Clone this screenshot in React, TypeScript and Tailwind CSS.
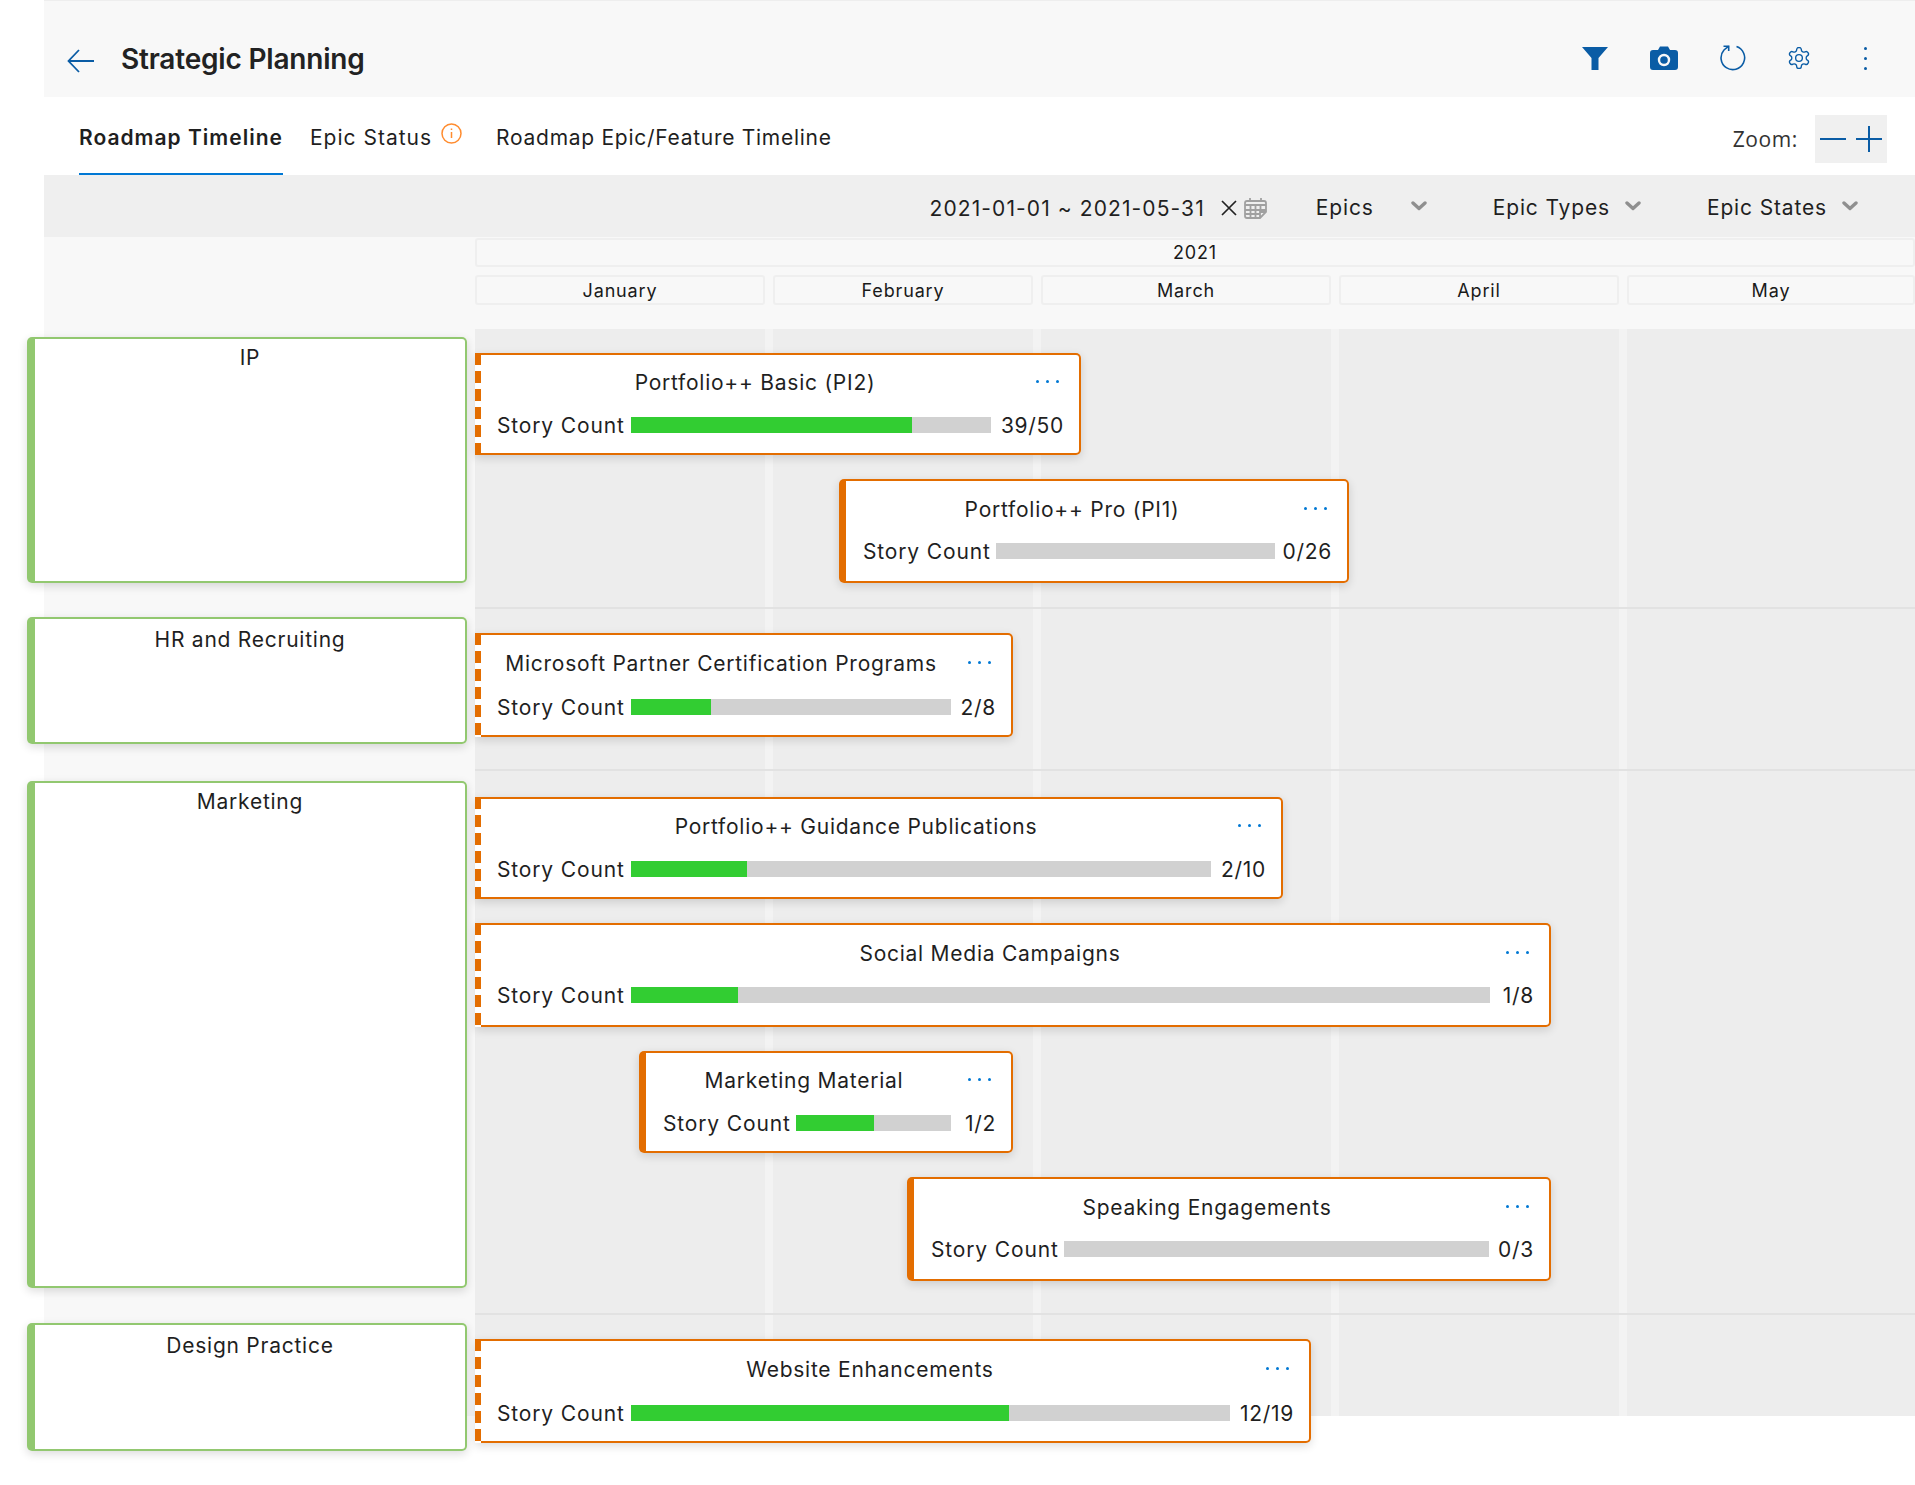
import React from "react";

const BLUE = "#0a5ca5";

type Epic = {
  title: string; done: number; total: number; label: string;
  outer: string; dashed: boolean; bar: number; tall: boolean; low?: boolean;
};

function Dots() {
  return (
    <div className="flex w-[23px] justify-between">
      <span className="h-[3px] w-[3px] rounded-full bg-[#0078d4]" />
      <span className="h-[3px] w-[3px] rounded-full bg-[#0078d4]" />
      <span className="h-[3px] w-[3px] rounded-full bg-[#0078d4]" />
    </div>
  );
}

function EpicCard({ e }: { e: Epic }) {
  const pct = (e.done / e.total) * 100;
  return (
    <div className={`flex shrink-0 bg-white shadow-[0_3px_10px_rgba(0,0,0,0.14)] rounded-r-[5px] ${e.tall ? "h-[104px]" : "h-[102px]"} ${e.dashed ? "" : "rounded-l-[5px]"} ${e.outer}`}>
      {e.dashed ? (
        <div className="w-[6px] shrink-0 bg-[repeating-linear-gradient(to_bottom,#e36d00_0,#e36d00_12px,#ffffff_12px,#ffffff_18px)]" />
      ) : (
        <div className="w-[7px] shrink-0 rounded-l-[5px] bg-[#e36d00]" />
      )}
      <div className={`flex min-w-0 flex-1 flex-col rounded-r-[5px] border-y-2 border-r-2 border-[#e36d00] pr-[15px] ${e.dashed ? "pl-[16px]" : "pl-[17px]"}`}>
        <div className={`flex h-[54px] shrink-0 items-center ${e.tall ? "pt-[2px]" : ""}`}>
          <div className="flex-1 pl-[3px] pt-[1px] text-center tracking-[0.75px]">{e.title}</div>
          <div className="-mt-[2px] ml-[26px] mr-[5px]"><Dots /></div>
        </div>
        <div className={`flex h-[32px] items-center ${e.low ? "mt-[2px]" : ""}`}>
          <span className={`shrink-0 whitespace-nowrap pt-[2px] ${e.dashed ? "w-[134px]" : "w-[133px]"}`}>Story Count</span>
          <div className="h-[16px] bg-[#d1d1d1]" style={{ width: e.bar }}>
            <div className="h-full bg-[#32cd32]" style={{ width: `${pct}%` }} />
          </div>
          <span className="ml-auto whitespace-nowrap pt-[2px] tracking-[0.7px]">{e.label}</span>
        </div>
      </div>
    </div>
  );
}

function GroupCard({ name, outer, top }: { name: string; outer: string; top: string }) {
  return (
    <div className={`-ml-[17px] flex w-[440px] rounded-[5px] bg-white shadow-[0_3px_10px_rgba(0,0,0,0.14)] ${outer}`}>
      <div className="w-[8px] shrink-0 rounded-l-[5px] bg-[#92c870]" />
      <div className={`flex-1 rounded-r-[5px] border-y-2 border-r-2 border-[#92c870] text-center leading-[30px] tracking-[0.75px] ${top}`}>{name}</div>
    </div>
  );
}

const r1: Epic[] = [
  { title: "Portfolio++ Basic (PI2)", done: 39, total: 50, label: "39/50", outer: "w-[606px]", dashed: true, bar: 360, tall: false },
  { title: "Portfolio++ Pro (PI1)", done: 0, total: 26, label: "0/26", outer: "ml-[364px] w-[510px]", dashed: false, bar: 279, tall: true },
];
const r2: Epic[] = [
  { title: "Microsoft Partner Certification Programs", done: 2, total: 8, label: "2/8", outer: "w-[538px]", dashed: true, bar: 320, tall: true, low: true },
];
const r3: Epic[] = [
  { title: "Portfolio++ Guidance Publications", done: 2, total: 10, label: "2/10", outer: "w-[808px]", dashed: true, bar: 580, tall: false },
  { title: "Social Media Campaigns", done: 1, total: 8, label: "1/8", outer: "w-[1076px]", dashed: true, bar: 859, tall: true },
  { title: "Marketing Material", done: 1, total: 2, label: "1/2", outer: "ml-[164px] w-[374px]", dashed: false, bar: 155, tall: false },
  { title: "Speaking Engagements", done: 0, total: 3, label: "0/3", outer: "ml-[432px] w-[644px]", dashed: false, bar: 425, tall: true },
];
const r4: Epic[] = [
  { title: "Website Enhancements", done: 12, total: 19, label: "12/19", outer: "w-[836px]", dashed: true, bar: 599, tall: true, low: true },
];

function Chevron() {
  return (
    <svg width="16" height="10" viewBox="0 0 16 10" fill="none">
      <path d="M2 2 L8 7.5 L14 2" stroke="#8f8f8f" strokeWidth="3.4" strokeLinecap="round" strokeLinejoin="round" />
    </svg>
  );
}

function Month({ name, outer }: { name: string; outer: string }) {
  return (
    <div className={`flex h-[30px] items-center justify-center rounded-[3px] border-2 border-[#efefef] text-[18px] tracking-[0.85px] text-[#1a1a1a] ${outer}`}>{name}</div>
  );
}

export default function App() {
  return (
    <div className="min-h-[1485px] w-[1915px] overflow-hidden bg-white font-['Inter',sans-serif] text-[21px] tracking-[0.85px] text-[#1f1f1f]">
      <header className="ml-[44px] flex h-[97px] items-center border-t border-[#eeeeee] bg-[#f8f8f8] pl-[23px] pr-[47px] pt-[23px]">
        <svg width="27" height="24" viewBox="0 0 27 24" fill="none" stroke={BLUE} strokeWidth="1.8">
          <path d="M27 12 H1.5 M12 1 L1.5 12 L12 23" />
        </svg>
        <h1 className="-mt-[3px] ml-[27px] text-[28px] font-semibold tracking-[-0.2px] text-[#222222]">Strategic Planning</h1>
        <div className="-mt-[5px] ml-auto flex items-center gap-[42px]">
          <svg width="26" height="23" viewBox="0 0 26 23" fill={BLUE}>
            <path d="M0 0 H26 L16.5 11 V23 H9.5 V11 Z" />
          </svg>
          <svg width="28" height="24" viewBox="0 0 28 24">
            <path fill={BLUE} d="M3 4 H8 L10 0.5 H18 L20 4 H25 Q28 4 28 7 V21 Q28 24 25 24 H3 Q0 24 0 21 V7 Q0 4 3 4 Z" />
            <circle cx="14" cy="14" r="5" fill="none" stroke="#f8f8f8" strokeWidth="2.4" />
          </svg>
          <svg width="26" height="26" viewBox="0 0 26 26" fill="none" stroke={BLUE} strokeWidth="1.6">
            <path d="M16.5 1.6 A11.8 11.8 0 1 1 4 5 L8.7 1.2" />
            <path d="M3.5 1.2 H8.7 V6" />
          </svg>
          <svg width="22" height="22" viewBox="1.5 1.5 21 21" fill="none" stroke={BLUE} strokeWidth="1.3" strokeLinecap="round" strokeLinejoin="round">
            <path d="M12.22 2h-.44a2 2 0 0 0-2 2v.18a2 2 0 0 1-1 1.73l-.43.25a2 2 0 0 1-2 0l-.15-.08a2 2 0 0 0-2.73.73l-.22.38a2 2 0 0 0 .73 2.73l.15.1a2 2 0 0 1 1 1.72v.51a2 2 0 0 1-1 1.74l-.15.09a2 2 0 0 0-.73 2.73l.22.38a2 2 0 0 0 2.73.73l.15-.08a2 2 0 0 1 2 0l.43.25a2 2 0 0 1 1 1.73V20a2 2 0 0 0 2 2h.44a2 2 0 0 0 2-2v-.18a2 2 0 0 1 1-1.73l.43-.25a2 2 0 0 1 2 0l.15.08a2 2 0 0 0 2.73-.73l.22-.39a2 2 0 0 0-.73-2.73l-.15-.08a2 2 0 0 1-1-1.74v-.5a2 2 0 0 1 1-1.74l.15-.09a2 2 0 0 0 .73-2.73l-.22-.38a2 2 0 0 0-2.73-.73l-.15.08a2 2 0 0 1-2 0l-.43-.25a2 2 0 0 1-1-1.73V4a2 2 0 0 0-2-2z" />
            <circle cx="12" cy="12" r="3.2" />
          </svg>
          <div className="ml-[10px] flex h-[23px] w-[6px] flex-col items-center justify-between">
            <span className="h-[3px] w-[3px] rounded-full bg-[#0a5ca5]" />
            <span className="h-[3px] w-[3px] rounded-full bg-[#0a5ca5]" />
            <span className="h-[3px] w-[3px] rounded-full bg-[#0a5ca5]" />
          </div>
        </div>
      </header>

      <nav className="ml-[44px] flex h-[78px] items-stretch pl-[35px] pr-[28px]">
        <div className="flex w-[204px] items-center whitespace-nowrap border-b-2 border-[#0078d4] pt-[5px] font-semibold tracking-[1px]">Roadmap Timeline</div>
        <div className="ml-[27px] flex items-center pt-[3px] tracking-[1px]">
          Epic Status
          <svg className="-mt-[8px] ml-[9px]" width="21" height="21" viewBox="0 0 21 21" fill="none" stroke="#ff8c2f" strokeWidth="1.5">
            <circle cx="10.5" cy="10.5" r="9.5" />
            <path d="M10.5 9 V15 M10.5 5.5 V7" />
          </svg>
        </div>
        <div className="ml-[34px] flex items-center pt-[3px] tracking-[0.72px]">Roadmap Epic/Feature Timeline</div>
        <div className="ml-auto flex items-center pt-[5px]">
          <span className="pt-[2px] font-['Open_Sans',sans-serif] text-[21px] font-medium tracking-[0.6px] text-[#333333]">Zoom:</span>
          <div className="ml-[17px] flex h-[48px] w-[72px] items-center justify-center gap-[10px] bg-[#f0f0f0]">
            <svg width="26" height="26" viewBox="0 0 26 26" stroke={BLUE} strokeWidth="2"><path d="M0 13 H26" /></svg>
            <svg width="26" height="26" viewBox="0 0 26 26" stroke={BLUE} strokeWidth="2"><path d="M0 13 H26 M13 0 V26" /></svg>
          </div>
        </div>
      </nav>

      <div className="ml-[44px] flex h-[62px] items-center justify-end bg-[#efefef] pr-[57px]">
        <span className="whitespace-nowrap pt-[6px] tracking-[1.1px]">2021-01-01 ~ 2021-05-31</span>
        <svg className="ml-[16px] mt-[4px]" width="16" height="16" viewBox="0 0 16 16" stroke="#222222" strokeWidth="1.7"><path d="M1 1 L15 15 M15 1 L1 15" /></svg>
        <svg className="ml-[7px] mt-[4px]" width="23" height="22" viewBox="0 0 23 22" fill="none" stroke="#a0a0a0" strokeWidth="1.8">
          <path d="M3 4 H20 Q22 4 22 6 V15 L16 21 H3 Q1 21 1 19 V6 Q1 4 3 4 Z M1 8 H22 M6 1 V4 M17 1 V4 M1 13 H22 M1 17 H16 M6.5 8 V21 M11.5 8 V21 M16.5 8 V15 M16 21 V15 H22" />
        </svg>
        <span className="ml-[49px] pt-[3px]">Epics</span>
        <span className="ml-[37px]"><Chevron /></span>
        <span className="ml-[66px] pt-[3px]">Epic Types</span>
        <span className="ml-[15px]"><Chevron /></span>
        <span className="ml-[66px] pt-[3px]">Epic States</span>
        <span className="ml-[15px]"><Chevron /></span>
      </div>

      <div className="ml-[44px] h-[92px] bg-[#f8f8f8] pl-[431px] pt-px">
        <div className="flex h-[29px] items-center justify-center rounded-[3px] border-2 border-[#efefef] text-[18px] text-[#1a1a1a]">2021</div>
        <div className="mt-[8px] flex gap-[8px]">
          <Month name="January" outer="w-[290px]" />
          <Month name="February" outer="w-[260px]" />
          <Month name="March" outer="w-[290px]" />
          <Month name="April" outer="w-[280px]" />
          <Month name="May" outer="flex-1" />
        </div>
      </div>

      <div className="relative ml-[44px] h-[1087px] bg-[#f8f8f8]">
        <div className="absolute inset-y-0 left-[431px] right-0 flex bg-[#ededed]">
          <div className="ml-[290px] w-[8px] bg-[#f3f3f3]" />
          <div className="ml-[260px] w-[8px] bg-[#f3f3f3]" />
          <div className="ml-[290px] w-[8px] bg-[#f3f3f3]" />
          <div className="ml-[280px] w-[8px] bg-[#f3f3f3]" />
        </div>
        <div className="relative flex h-[280px]">
          <div className="w-[431px] pt-[8px]"><GroupCard name="IP" outer="h-[246px]" top="pt-[4px]" /></div>
          <div className="flex flex-1 flex-col gap-[24px] border-b-2 border-[#e2e2e2] pt-[24px]">
            {r1.map((e) => <EpicCard key={e.title} e={e} />)}
          </div>
        </div>
        <div className="relative flex h-[162px]">
          <div className="w-[431px] pt-[8px]"><GroupCard name="HR and Recruiting" outer="h-[127px]" top="pt-[6px]" /></div>
          <div className="flex flex-1 flex-col gap-[24px] border-b-2 border-[#e2e2e2] pt-[24px]">
            {r2.map((e) => <EpicCard key={e.title} e={e} />)}
          </div>
        </div>
        <div className="relative flex h-[544px]">
          <div className="w-[431px] pt-[10px]"><GroupCard name="Marketing" outer="h-[507px]" top="pt-[4px]" /></div>
          <div className="flex flex-1 flex-col gap-[24px] border-b-2 border-[#e2e2e2] pt-[26px]">
            {r3.map((e) => <EpicCard key={e.title} e={e} />)}
          </div>
        </div>
        <div className="relative flex h-[101px]">
          <div className="w-[431px] pt-[8px]"><GroupCard name="Design Practice" outer="h-[128px]" top="pt-[6px]" /></div>
          <div className="flex flex-1 flex-col pt-[24px]">
            {r4.map((e) => <EpicCard key={e.title} e={e} />)}
          </div>
        </div>
      </div>
    </div>
  );
}
